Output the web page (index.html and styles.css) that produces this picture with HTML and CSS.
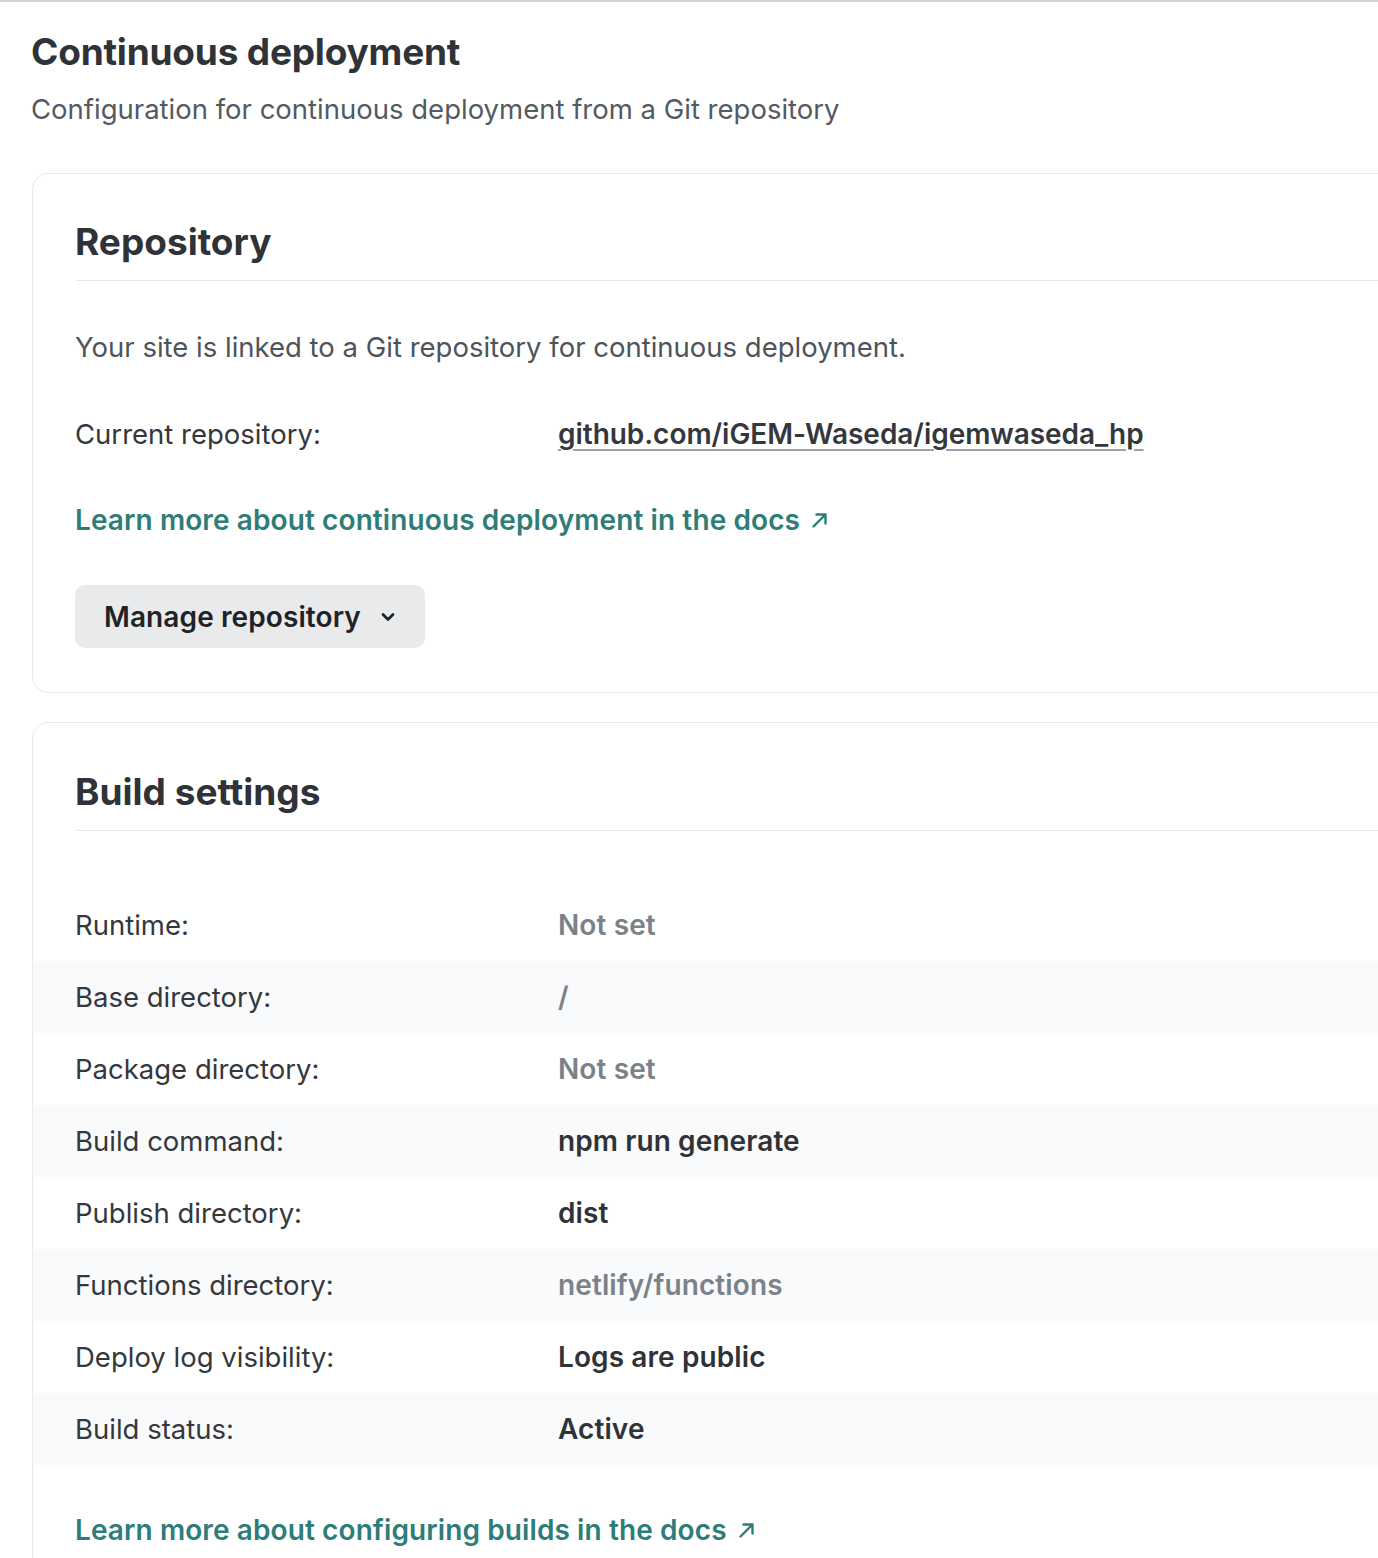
FILE: index.html
```html
<!DOCTYPE html>
<html lang="en">
<head>
<meta charset="utf-8">
<title>Continuous deployment</title>
<link rel="stylesheet" href="styles.css">
</head>
<body>
<div class="topline"></div>
<main class="page">
  <h1 class="page-title">Continuous deployment</h1>
  <p class="page-sub">Configuration for continuous deployment from a Git repository</p>

  <section class="card">
    <h2 class="card-title">Repository</h2>
    <p class="card-text">Your site is linked to a Git repository for continuous deployment.</p>
    <div class="repo-row">
      <span class="label">Current repository:</span>
      <a class="repo-link" href="#">github.com/iGEM-Waseda/igemwaseda_hp</a>
    </div>
    <a class="doc-link" href="#">Learn more about continuous deployment in the docs <svg class="ext" width="18" height="18" viewBox="0 0 18 18"><path d="M2.5 15.5 L14.5 3.5 M5.5 3.5 H14.5 V12.5" fill="none" stroke="currentColor" stroke-width="2.4" stroke-linecap="round" stroke-linejoin="round"/></svg></a>
    <div class="btn-row">
      <button class="btn">Manage repository <svg class="chev" width="14" height="10" viewBox="0 0 14 10"><path d="M2 2.5 L7 7.5 L12 2.5" fill="none" stroke="currentColor" stroke-width="2.8" stroke-linecap="round" stroke-linejoin="round"/></svg></button>
    </div>
  </section>

  <section class="card card-build">
    <h2 class="card-title">Build settings</h2>
    <dl class="settings">
      <div class="srow"><dt>Runtime:</dt><dd class="muted">Not set</dd></div>
      <div class="srow"><dt>Base directory:</dt><dd class="muted">/</dd></div>
      <div class="srow"><dt>Package directory:</dt><dd class="muted">Not set</dd></div>
      <div class="srow"><dt>Build command:</dt><dd>npm run generate</dd></div>
      <div class="srow"><dt>Publish directory:</dt><dd>dist</dd></div>
      <div class="srow"><dt>Functions directory:</dt><dd class="muted">netlify/functions</dd></div>
      <div class="srow"><dt>Deploy log visibility:</dt><dd>Logs are public</dd></div>
      <div class="srow"><dt>Build status:</dt><dd>Active</dd></div>
    </dl>
    <a class="doc-link" href="#">Learn more about configuring builds in the docs <svg class="ext" width="18" height="18" viewBox="0 0 18 18"><path d="M2.5 15.5 L14.5 3.5 M5.5 3.5 H14.5 V12.5" fill="none" stroke="currentColor" stroke-width="2.4" stroke-linecap="round" stroke-linejoin="round"/></svg></a>
  </section>
</main>
</body>
</html>
```

FILE: styles.css
```css
html, body {
  margin: 0;
  padding: 0;
  background: #ffffff;
  overflow: hidden;
}
body {
  font-family: Inter, "Noto Sans", "Liberation Sans", sans-serif;
  color: #34383d;
  font-size: 27.5px;
  line-height: 40px;
}
.topline {
  height: 2px;
  background: #d3d3d3;
}
.page {
  padding-left: 32px;
  width: 1500px;
}
.page-title {
  margin: 26px 0 0 -1px;
  font-size: 37px;
  line-height: 48px;
  font-weight: 700;
  color: #2f3338;
  letter-spacing: -0.2px;
}
.page-sub {
  margin: 13px 0 0 -1px;
  font-size: 27.5px;
  line-height: 40px;
  color: #545a61;
}
.card {
  margin-top: 44px;
  border: 1px solid #e7e9eb;
  border-radius: 16px;
  padding: 44px 0 44px 43px;
}
.card-build {
  margin-top: 29px;
  padding-top: 45px;
  padding-bottom: 60px;
}
.card-title {
  margin: 0;
  font-size: 37px;
  line-height: 48px;
  font-weight: 700;
  color: #2f3338;
  letter-spacing: 0;
  padding-bottom: 14px;
  border-bottom: 1px solid #e4e6e8;
}
.card-title, .card-text, .label, .doc-link, .srow dt {
  text-indent: -1px;
}
.card-text {
  margin: 46px 0 0 0;
  color: #4e545a;
  font-size: 27.5px;
}
.repo-row {
  margin-top: 47px;
  display: flex;
  align-items: center;
}
.label {
  width: 482px;
  flex: none;
  font-size: 27.5px;
}
.repo-link {
  color: #34383d;
  font-weight: 600;
  font-size: 28px;
  letter-spacing: -0.05px;
  text-decoration: underline;
  text-decoration-color: #9aa1a9;
  text-decoration-thickness: 2px;
  text-underline-offset: 5px;
}
.doc-link {
  display: inline-flex;
  align-items: center;
  gap: 11px;
  margin-top: 46px;
  color: #2e7d78;
  font-weight: 600;
  font-size: 28px;
  letter-spacing: 0.1px;
  text-decoration: none;
}
.ext {
  flex: none;
}
.btn-row {
  margin-top: 45px;
}
.btn {
  height: 63px;
  border: none;
  border-radius: 10px;
  background: #e9eaec;
  padding: 0 30px 0 29px;
  margin-left: -1px;
  font-family: inherit;
  font-size: 28px;
  font-weight: 600;
  letter-spacing: 0.1px;
  color: #1f2226;
  display: inline-flex;
  align-items: center;
  gap: 20px;
}
.settings {
  margin: 58px 0 0 -43px;
  padding: 0;
}
.srow {
  display: flex;
  align-items: center;
  height: 72px;
  padding-left: 43px;
}
.srow:nth-child(even) {
  background: #f9fafb;
}
.srow dt {
  width: 482px;
  flex: none;
  font-size: 27.5px;
}
.srow dd {
  margin: 0;
  font-weight: 600;
  font-size: 28px;
  letter-spacing: 0.1px;
  color: #2f3338;
}
.srow dd.muted {
  color: #7b828a;
}
.card-build .doc-link {
  margin-top: 45px;
}
```
